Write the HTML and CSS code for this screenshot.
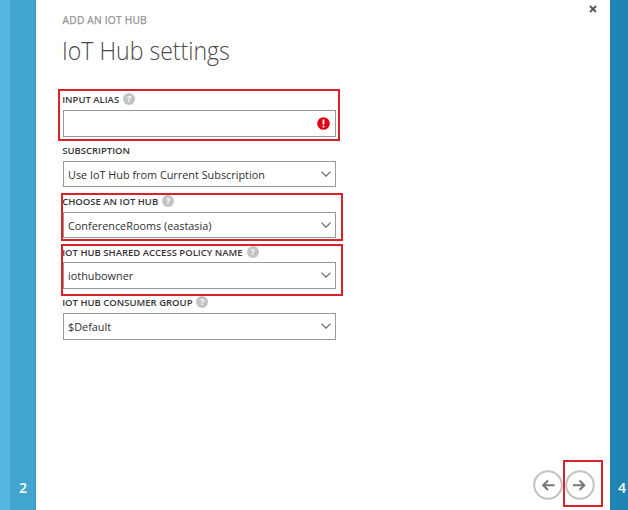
FILE: index.html
```
<!DOCTYPE html>
<html lang="en">
<head>
<meta charset="utf-8">
<title>IoT Hub settings</title>
<link rel="stylesheet" href="styles.css">
</head>
<body>
<div class="wizard">
  <div class="edge"></div>
  <div class="step step-previous">2</div>
  <main class="panel">
    <svg class="close" viewBox="0 0 8 8"><path d="M1 1L7 7M7 1L1 7"/></svg>
    <div class="eyebrow">ADD AN IOT HUB</div>
    <h1>IoT Hub settings</h1>
    <form>
      <div class="field">
        <div class="label"><span>INPUT ALIAS</span><i class="help">?</i></div>
        <div class="control"><svg class="error" viewBox="0 0 13 13"><circle cx="6.5" cy="6.5" r="6.3"/><path d="M6.5 2.4V7.5M6.5 8.8V10.6"/></svg></div>
        <div class="highlight highlight-alias"></div>
      </div>
      <div class="field">
        <div class="label"><span>SUBSCRIPTION</span></div>
        <div class="control"><span class="value">Use IoT Hub from Current Subscription</span><svg class="chevron" viewBox="0 0 10 6"><path d="M.5 .6L5 5.1L9.5 .6"/></svg></div>
      </div>
      <div class="field">
        <div class="label"><span>CHOOSE AN IOT HUB</span><i class="help">?</i></div>
        <div class="control"><span class="value">ConferenceRooms (eastasia)</span><svg class="chevron" viewBox="0 0 10 6"><path d="M.5 .6L5 5.1L9.5 .6"/></svg></div>
        <div class="highlight highlight-hub"></div>
      </div>
      <div class="field">
        <div class="label"><span>IOT HUB SHARED ACCESS POLICY NAME</span><i class="help">?</i></div>
        <div class="control"><span class="value">iothubowner</span><svg class="chevron" viewBox="0 0 10 6"><path d="M.5 .6L5 5.1L9.5 .6"/></svg></div>
        <div class="highlight highlight-policy"></div>
      </div>
      <div class="field">
        <div class="label"><span>IOT HUB CONSUMER GROUP</span><i class="help">?</i></div>
        <div class="control"><span class="value">$Default</span><svg class="chevron" viewBox="0 0 10 6"><path d="M.5 .6L5 5.1L9.5 .6"/></svg></div>
      </div>
    </form>
    <nav class="pager">
      <svg viewBox="0 0 30 30"><circle cx="15" cy="15" r="13.8"/><path d="M21.5 15.2H10.5M15 10.4L10.2 15.2L15 20"/></svg>
      <svg viewBox="0 0 30 30"><circle cx="15" cy="15" r="13.8"/><path d="M8 15.2H19M14.5 10.4L19.3 15.2L14.5 20"/></svg>
      <div class="highlight highlight-next"></div>
    </nav>
  </main>
  <div class="step step-next">4</div>
</div>
</body>
</html>
```
FILE: styles.css
```
* { box-sizing: border-box; }
body { margin: 0; overflow: hidden; font-family: "Open Sans", "Noto Sans", sans-serif; }
.wizard { display: flex; width: 628px; height: 510px; background: #fff; }
.edge { width: 10px; background: #53b5e0; }
.step { display: flex; align-items: flex-end; color: #fff; font-size: 14px; font-weight: 600; line-height: 20px; padding-bottom: 12px; }
.step-previous { width: 26px; padding-left: 9px; background: #42a5d0; border-right: 1px solid #3598c4; }
.step-next { width: 18px; padding-left: 8px; background: #2083b1; }
.panel { position: relative; width: 574px; padding: 12px 0 0 27px; display: flex; flex-direction: column; }
.close { position: absolute; left: 553px; top: 5px; width: 8px; height: 8px; fill: none; stroke: #555; stroke-width: 1.8; }
.eyebrow { height: 16px; line-height: 16px; margin-left: -.4px; font-size: 10.2px; letter-spacing: .22px; color: #929292; -webkit-text-stroke: .25px #929292; white-space: nowrap; }
h1 { width: 240px; margin: 5px 0 0 -.7px; height: 34px; line-height: 34px; font-size: 25px; font-weight: 300; color: #4a4a4a; white-space: nowrap; transform: scaleX(.923); transform-origin: 0 50%; }
form { width: 273px; margin-top: 18px; }
.field { position: relative; height: 50.8px; }
.label { display: flex; align-items: center; gap: 4px; height: 25px; margin-left: -.8px; padding-top: 5.4px; font-size: 9.5px; font-weight: 600; line-height: 16px; color: #353535; white-space: nowrap; }
.help { width: 12px; height: 12px; margin-top: -2px; border-radius: 50%; background: #c3c3c3; color: #fff; font-size: 9px; font-style: normal; font-weight: 700; line-height: 12px; text-align: center; }
.control { display: flex; align-items: center; height: 26.6px; padding: .6px 5px 0 4px; border: 1px solid #999; font-size: 11.5px; color: #303030; white-space: nowrap; }
.value { transform: scaleX(.943); transform-origin: 0 50%; }
.chevron { width: 10px; height: 6px; margin: -1px -1px 0 auto; overflow: visible; fill: none; stroke: #606060; stroke-width: 1.1; }
.error { width: 13px; height: 13px; margin: -1px 0 0 auto; fill: #df0613; }
.error path { stroke: #fff; stroke-width: 1.8; }
.highlight { position: absolute; border: 2px solid #d8232a; }
.highlight-alias { left: -5px; top: 4px; width: 282px; height: 52px; }
.highlight-hub { left: -2px; top: 6px; width: 282px; height: 48px; }
.highlight-policy { left: -2px; top: 6.6px; width: 282px; height: 52px; }
.pager { position: relative; display: flex; gap: 2px; width: 62px; margin: auto 0 10px 469.5px; }
.pager svg { width: 30px; height: 30px; fill: none; stroke: #777; stroke-width: 2.1; }
.pager circle { stroke: #c3c3c3; stroke-width: 2; }
.highlight-next { left: 30.5px; top: -10px; width: 40px; height: 47px; }
```
